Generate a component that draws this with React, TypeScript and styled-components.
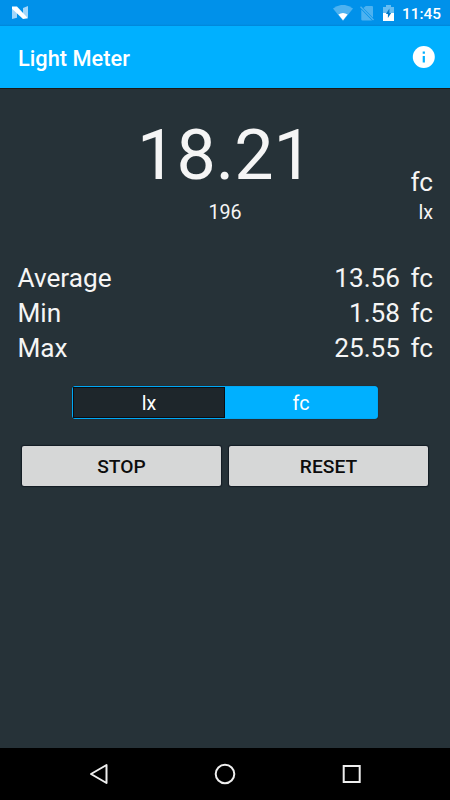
import React from "react";
import styled, { createGlobalStyle } from "styled-components";

const GlobalStyle = createGlobalStyle`
  * { box-sizing: border-box; }
  body { margin: 0; background: #263238; font-family: Roboto, sans-serif; }
`;

const Screen = styled.div`
  width: 450px;
  height: 800px;
  display: flex;
  flex-direction: column;
  overflow: hidden;
  background: #263238;
  color: #f5f5f5;
`;

const StatusBar = styled.div`
  height: 26px;
  flex: none;
  display: flex;
  align-items: center;
  background: linear-gradient(#0091ea 24px, #0086d8);
  padding: 0 9px 0 12px;
`;

const StatusIcons = styled.div`
  flex: 1;
  display: flex;
  justify-content: flex-end;
  align-items: center;
  margin-right: 8px;
`;

const Gap = styled.span<{ $width: number }>`
  width: ${(p) => p.$width}px;
`;

const Clock = styled.span`
  font-size: 15.4px;
  font-weight: 500;
  line-height: 26px;
  padding-top: 1px;
  color: #fff;
`;

const AppBar = styled.header`
  height: 62px;
  flex: none;
  display: flex;
  align-items: center;
  justify-content: space-between;
  padding: 0 13px 0 18px;
  background: #00b0ff;
  box-shadow: 0 1px 0 #1a1a18;
`;

const Title = styled.h1`
  margin: 0;
  padding-top: 2px;
  font-size: 21.8px;
  font-weight: 500;
  color: #fff;
`;

const Content = styled.main`
  flex: 1;
  padding: 25px 17px 0;
`;

const Reading = styled.div<{ $size: number; $height: number }>`
  display: grid;
  grid-template-columns: 60px 1fr 60px;
  align-items: baseline;
  height: ${(p) => p.$height}px;
  line-height: ${(p) => p.$height}px;
  font-size: ${(p) => p.$size}px;
`;

const ReadingValue = styled.span`
  grid-column: 2;
  text-align: center;
`;

const ReadingUnit = styled.span<{ $size: number; $drop?: number }>`
  font-size: ${(p) => p.$size}px;
  text-align: right;
  padding-top: ${(p) => p.$drop ?? 0}px;
  line-height: 24px;
  align-self: ${(p) => (p.$drop ? "start" : "baseline")};
`;

const Stats = styled.div`
  margin-top: 33px;
`;

const StatRow = styled.div`
  display: flex;
  height: 35px;
  line-height: 35px;
  font-size: 26.2px;
`;

const StatLabel = styled.span`
  flex: 1;
  padding-left: 0.5px;
`;

const StatUnit = styled.span`
  width: 33px;
  text-align: right;
`;

const Segmented = styled.div`
  width: 306px;
  height: 33px;
  margin: 20px auto 0;
  display: flex;
  border: 1px solid #00a8f5;
  border-radius: 3px;
  background: #00b0ff;
  box-shadow: 0 0 1px #101b20;
`;

const Segment = styled.div<{ $active?: boolean }>`
  flex: 1;
  line-height: 33px;
  font-size: 19.7px;
  text-align: center;
  color: #fff;
  background: ${(p) => (p.$active ? "#00b0ff" : "#1e262b")};
  box-shadow: ${(p) => (p.$active ? "none" : "inset 0 0 0 1px #080d14")};
`;

const Actions = styled.div`
  display: flex;
  gap: 8px;
  margin: 27px 5px 0;
`;

const ActionButton = styled.button`
  flex: 1;
  height: 40px;
  padding: 1px 0 0;
  border: 0;
  border-radius: 2px;
  background: #d6d7d7;
  color: #0c0c0c;
  font: 500 19.2px Roboto, sans-serif;
  box-shadow: 0 0 1px 1px #131b24;
`;

const NavBar = styled.nav`
  height: 52px;
  flex: none;
  background: #000;
  display: flex;
  align-items: center;
  justify-content: space-between;
  padding: 0 86px;
`;

const stats = [
  { label: "Average", value: "13.56" },
  { label: "Min", value: "1.58" },
  { label: "Max", value: "25.55" },
];

const NLogo = () => (
  <svg width="16" height="14" viewBox="0 0 16 14">
    <path d="M0 1.5 5 5v6.7L0 13zM16 0v12l-5-3V2z" fill="#a3d6fa" />
    <path d="M0 .5h5L16 12.2 11 13 0 2.8z" fill="#fff" />
  </svg>
);

const Wifi = () => (
  <svg width="20" height="16" viewBox="0 0 20 16">
    <path d="M0 3.5Q10-3.8 20 3.5L10 16z" fill="#4db2f0" />
    <path d="M5.4 9.5Q10 6.5 14.6 9.5L10 15.3z" fill="#fff" />
  </svg>
);

const NoSim = () => (
  <svg width="14" height="16" viewBox="0 0 14 16">
    <path d="M3.4 2.9 5.8.9H12q1 0 1 1v10.9zM1.3 4.6 12 15.4H2.5q-1.2 0-1.2-1z" fill="#4db2f0" />
    <path d="m.5 1.8 13 13.2" stroke="#4db2f0" strokeWidth="1.4" />
  </svg>
);

const Battery = () => (
  <svg width="11" height="16" viewBox="0 0 11 16">
    <path d="M0 2h3V0h5v2h3v6H0z" fill="#66bdf3" />
    <path d="M0 8h11v8H0z" fill="#fff" />
    <path d="M6.4 3.5 2.9 9h2v4L8.2 7.9H6.4z" fill="#0079c8" />
  </svg>
);

const Info = () => (
  <svg width="26" height="24" viewBox="0 0 26 24">
    <circle cx="12.8" cy="12" r="11" fill="#fff" />
    <path d="M11.7 6.5h2.2v2.2h-2.2zM11.7 11h2.2v6.5h-2.2z" fill="#00b0ff" />
  </svg>
);

const Back = () => (
  <svg width="24" height="24" viewBox="0 0 24 24">
    <path d="M20.5 3v18L5 12z" fill="none" stroke="#eee" strokeWidth="2" strokeLinejoin="round" />
  </svg>
);

const Home = () => (
  <svg width="24" height="24" viewBox="0 0 24 24">
    <circle cx="12" cy="12" r="9.3" fill="none" stroke="#eee" strokeWidth="2" />
  </svg>
);

const Recents = () => (
  <svg width="24" height="24" viewBox="0 0 24 24">
    <rect x="3.7" y="4" width="16" height="16" fill="none" stroke="#eee" strokeWidth="2" />
  </svg>
);

export default function App() {
  return (
    <>
      <GlobalStyle />
      <Screen>
        <StatusBar>
          <NLogo />
          <StatusIcons>
            <Wifi />
            <Gap $width={7} />
            <NoSim />
            <Gap $width={9} />
            <Battery />
          </StatusIcons>
          <Clock>11:45</Clock>
        </StatusBar>
        <AppBar>
          <Title>Light Meter</Title>
          <Info />
        </AppBar>
        <Content>
          <Reading $size={70} $height={85}>
            <ReadingValue>18.21</ReadingValue>
            <ReadingUnit $size={26.2} $drop={57}>fc</ReadingUnit>
          </Reading>
          <Reading $size={19.7} $height={30}>
            <ReadingValue>196</ReadingValue>
            <ReadingUnit $size={19.7}>lx</ReadingUnit>
          </Reading>
          <Stats>
            {stats.map((s) => (
              <StatRow key={s.label}>
                <StatLabel>{s.label}</StatLabel>
                <span>{s.value}</span>
                <StatUnit>fc</StatUnit>
              </StatRow>
            ))}
          </Stats>
          <Segmented>
            <Segment>lx</Segment>
            <Segment $active>fc</Segment>
          </Segmented>
          <Actions>
            <ActionButton>STOP</ActionButton>
            <ActionButton>RESET</ActionButton>
          </Actions>
        </Content>
        <NavBar>
          <Back />
          <Home />
          <Recents />
        </NavBar>
      </Screen>
    </>
  );
}
